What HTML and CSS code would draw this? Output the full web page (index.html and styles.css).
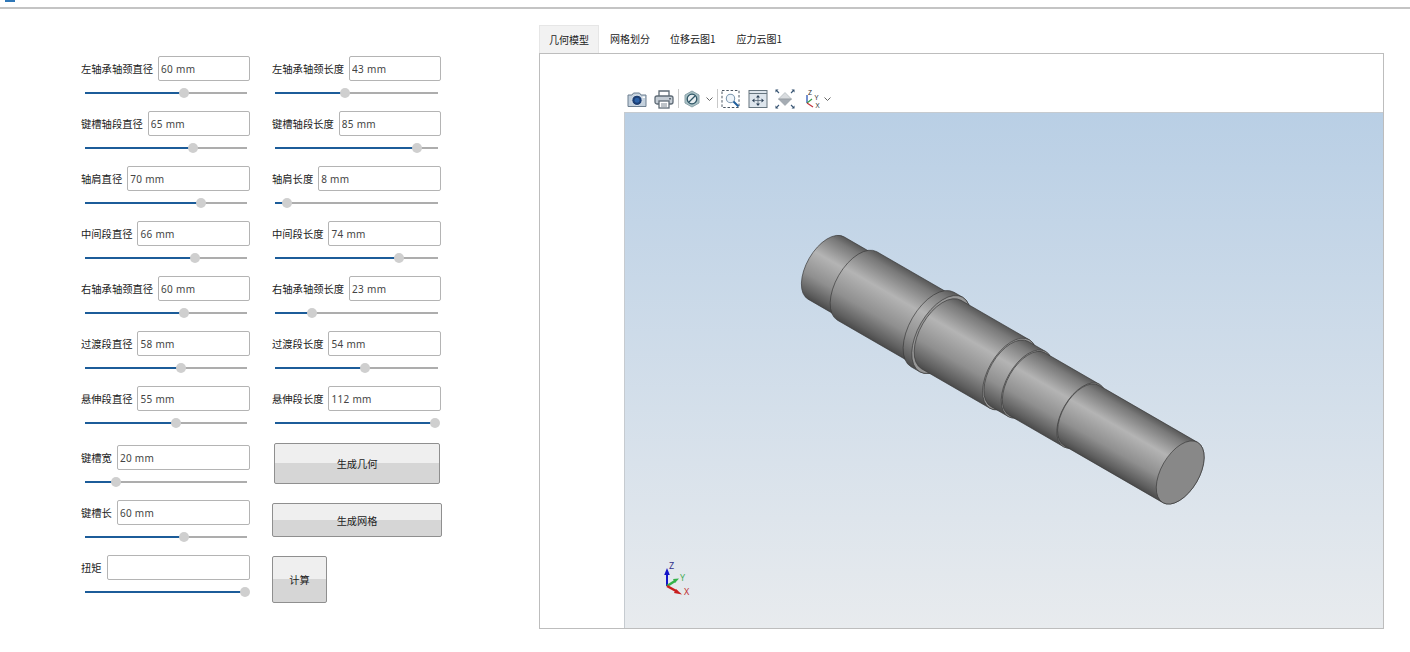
FILE: index.html
```html
<!DOCTYPE html>
<html lang="zh">
<head>
<meta charset="utf-8">
<title>轴设计</title>
<link rel="stylesheet" href="styles.css">
</head>
<body>
<header class="topbar"><span class="topbar-mark"></span></header>
<main class="main">
  <section class="controls">
    <div class="col">
      <div class="field"><div class="line"><label>左轴承轴颈直径</label><input value="60 mm"></div><div class="slider"><div class="fill" style="width:61.1%"><i class="thumb"></i></div></div></div>
      <div class="field"><div class="line"><label>键槽轴段直径</label><input value="65 mm"></div><div class="slider"><div class="fill" style="width:66.7%"><i class="thumb"></i></div></div></div>
      <div class="field"><div class="line"><label>轴肩直径</label><input value="70 mm"></div><div class="slider"><div class="fill" style="width:71.6%"><i class="thumb"></i></div></div></div>
      <div class="field"><div class="line"><label>中间段直径</label><input value="66 mm"></div><div class="slider"><div class="fill" style="width:67.9%"><i class="thumb"></i></div></div></div>
      <div class="field"><div class="line"><label>右轴承轴颈直径</label><input value="60 mm"></div><div class="slider"><div class="fill" style="width:61.1%"><i class="thumb"></i></div></div></div>
      <div class="field"><div class="line"><label>过渡段直径</label><input value="58 mm"></div><div class="slider"><div class="fill" style="width:59.3%"><i class="thumb"></i></div></div></div>
      <div class="field field-last"><div class="line"><label>悬伸段直径</label><input value="55 mm"></div><div class="slider"><div class="fill" style="width:56.2%"><i class="thumb"></i></div></div></div>
      <div class="field"><div class="line"><label>键槽宽</label><input value="20 mm"></div><div class="slider"><div class="fill" style="width:19.1%"><i class="thumb"></i></div></div></div>
      <div class="field"><div class="line"><label>键槽长</label><input value="60 mm"></div><div class="slider"><div class="fill" style="width:61.1%"><i class="thumb"></i></div></div></div>
      <div class="field"><div class="line"><label>扭矩</label><input value=""></div><div class="slider"><div class="fill" style="width:98.8%"><i class="thumb"></i></div></div></div>
    </div>
    <div class="col">
      <div class="field"><div class="line"><label>左轴承轴颈长度</label><input value="43 mm"></div><div class="slider"><div class="fill" style="width:42.9%"><i class="thumb"></i></div></div></div>
      <div class="field"><div class="line"><label>键槽轴段长度</label><input value="85 mm"></div><div class="slider"><div class="fill" style="width:87.1%"><i class="thumb"></i></div></div></div>
      <div class="field"><div class="line"><label>轴肩长度</label><input value="8 mm"></div><div class="slider"><div class="fill" style="width:7.4%"><i class="thumb"></i></div></div></div>
      <div class="field"><div class="line"><label>中间段长度</label><input value="74 mm"></div><div class="slider"><div class="fill" style="width:76%"><i class="thumb"></i></div></div></div>
      <div class="field"><div class="line"><label>右轴承轴颈长度</label><input value="23 mm"></div><div class="slider"><div class="fill" style="width:22.7%"><i class="thumb"></i></div></div></div>
      <div class="field"><div class="line"><label>过渡段长度</label><input value="54 mm"></div><div class="slider"><div class="fill" style="width:55.2%"><i class="thumb"></i></div></div></div>
      <div class="field"><div class="line"><label>悬伸段长度</label><input value="112 mm"></div><div class="slider"><div class="fill" style="width:98.2%"><i class="thumb"></i></div></div></div>
      <button class="btn btn-geo">生成几何</button>
      <button class="btn btn-mesh">生成网格</button>
      <button class="btn btn-calc">计算</button>
    </div>
  </section>
  <section class="results">
    <nav class="tabs">
      <span class="tab tab-active">几何模型</span>
      <span class="tab">网格划分</span>
      <span class="tab">位移云图1</span>
      <span class="tab">应力云图1</span>
    </nav>
    <div class="pane">
      <div class="toolbar">
        <svg class="ico ico-camera" viewBox="0 0 20 20"><path d="M1 6h4l1.500-2h6l1.500 2h5v11.500h-18z" fill="#c3d0dc" stroke="#6d7f90"/><circle cx="10" cy="11.300" r="5.200" fill="#1d3f73" stroke="#e4ebf1"/><circle cx="10" cy="11.300" r="2.500" fill="#2c62a8"/><rect x="15.500" y="7.500" width="2.500" height="1.500" fill="#fff"/></svg>
        <svg class="ico ico-print" viewBox="0 0 20 20"><path d="M5 7v-5h10v5" fill="#fff" stroke="#5f6b76" stroke-width="1.300"/><rect x="1" y="7" width="18" height="8" rx="2" fill="#c4ccd4" stroke="#5f6b76" stroke-width="1.300"/><rect x="5" y="12" width="10" height="7" fill="#fff" stroke="#5f6b76" stroke-width="1.300"/><path d="M7 15h6M7 17h6" stroke="#7c8791"/><rect x="15" y="9" width="2" height="1.500" fill="#5f6b76"/></svg>
        <span class="sep sep-a"></span>
        <svg class="ico ico-hex" viewBox="0 0 16 20"><path d="M8 2l7 4v8l-7 4-7-4v-8z" fill="#a8c0c4" stroke="#8ba3aa"/><circle cx="8" cy="10" r="4.800" fill="#e7edf0" stroke="#2f5666" stroke-width="1.300"/><path d="M5 13l6-6" stroke="#2f5666" stroke-width="1.300"/></svg>
        <svg class="chev chev-a" viewBox="0 0 9 20"><path d="M1.500 8.500l3 3 3-3" fill="none" stroke="#666" stroke-width="1"/></svg>
        <span class="sep sep-b"></span>
        <svg class="ico ico-zoom" viewBox="0 0 20 20"><rect x="1" y="1.500" width="17" height="17" fill="none" stroke="#4a5662" stroke-dasharray="2.500 1.800"/><circle cx="9.500" cy="9.500" r="4.200" fill="#eef4f9" stroke="#7d98b0" stroke-width="1.100"/><path d="M12.500 12.500l5 5" stroke="#1f5e9c" stroke-width="2"/></svg>
        <svg class="ico ico-fit" viewBox="0 0 20 20"><rect x="1" y="1.500" width="18" height="17" fill="#dde5ec" stroke="#66757f"/><path d="M1 4.500h18" stroke="#66757f"/><path d="M10 8v7M6.500 11.500h7" stroke="#5a6a79" stroke-width=".8"/><path d="M10 6l-2 2.500h4zM10 17l-2-2.500h4zM4 11.500l2.500-2v4zM16 11.500l-2.500-2v4z" fill="#2a3f55"/></svg>
        <svg class="ico ico-diamond" viewBox="0 0 20 20"><path d="M10 3.500l6.500 6.500h-13z" fill="#d9dcdf" stroke="#a5adb4" stroke-width=".6"/><path d="M3.500 10h13l-6.500 6.500z" fill="#a5acb3" stroke="#8d959c" stroke-width=".6"/><path d="M2 2l2 2M18 2l-2 2M2 18l2-2M18 18l-2-2" stroke="#3d5a78" stroke-width="1.100"/><path d="M.5.500h3l-3 3zM19.500.500h-3l3 3zM.5 19.500h3l-3-3zM19.500 19.500h-3l3-3z" fill="#2f4c6b"/></svg>
        <svg class="ico ico-axes" viewBox="0 0 20 20"><path d="M4 14v-8" stroke="#1a46b0" stroke-width="1.200"/><path d="M4 14l5-4" stroke="#3aa04a" stroke-width="1.200"/><path d="M4 14l6 4" stroke="#c0303a" stroke-width="1.200"/><text class="axes-txt" x="5" y="5.500">Z</text><text class="axes-txt" x="11.500" y="11">Y</text><text class="axes-txt" x="12.500" y="19">X</text></svg>
        <svg class="chev chev-b" viewBox="0 0 9 20"><path d="M1.500 8.500l3 3 3-3" fill="none" stroke="#666" stroke-width="1"/></svg>
      </div>
      <div class="viewer">
        <svg class="scene" viewBox="625 113 758 515">
          <defs>
            <linearGradient id="metal" x1="0" y1="0" x2="0" y2="1">
              <stop offset="0" stop-color="#585858"/>
              <stop offset=".1" stop-color="#797979"/>
              <stop offset=".38" stop-color="#b4b4b4"/>
              <stop offset=".7" stop-color="#8f8f8f"/>
              <stop offset=".92" stop-color="#5f5f5f"/>
              <stop offset="1" stop-color="#4a4a4a"/>
            </linearGradient>
          </defs>
          <g transform="translate(826 268) rotate(30)" fill="url(#metal)" stroke="#383838" stroke-width=".6">
            <path d="M0-36L36-36A19.400 36 0 0 1 36 36L0 36A19.400 36 0 0 1 0-36z"/>
            <path d="M36-39.500L123-39.500A21.300 39.500 0 0 1 123 39.500L36 39.500A21.300 39.500 0 0 1 36-39.500z"/>
            <path d="M123-43L133-43A23.200 43 0 0 1 133 43L123 43A23.200 43 0 0 1 123-43z"/>
            <ellipse cx="133" cy="0" rx="23.200" ry="43" fill="#969696"/>
            <path d="M133-39.500L212-39.500A21.300 39.500 0 0 1 212 39.500L133 39.500A21.300 39.500 0 0 1 133-39.500z"/>
            <ellipse cx="212" cy="0" rx="21.300" ry="39.500" fill="#969696"/>
            <path d="M212-37.500L232-37.500A20.300 37.500 0 0 1 232 37.500L212 37.500A20.300 37.500 0 0 1 212-37.500z"/>
            <ellipse cx="232" cy="0" rx="20.300" ry="37.500" fill="#969696"/>
            <path d="M232-36L295-36A19.400 36 0 0 1 295 36L232 36A19.400 36 0 0 1 232-36z"/>
            <ellipse cx="295" cy="0" rx="19.400" ry="36" fill="#969696"/>
            <path d="M295-34.800L409-34.800A19 34.800 0 0 1 409 34.800L295 34.800A19 34.800 0 0 1 295-34.800z"/>
            <ellipse cx="409" cy="0" rx="19" ry="34.800" fill="#888888"/>
          </g>
          <g stroke-width="2" fill="none">
            <path d="M667 586V574" stroke="#1414c8"/>
            <path d="M667 586l8-5" stroke="#34b24a" stroke-width="2.500"/>
            <path d="M667 586l10 5.500" stroke="#c81e1e" stroke-width="2.500"/>
          </g>
          <path d="M667 568l-2.800 7h5.600z" fill="#1414c8"/>
          <path d="M679 578.500l-6 .5 2 4z" fill="#34b24a"/>
          <path d="M682 594.500l-6-5.500-2 4z" fill="#c81e1e"/>
          <text class="triad triad-z" x="669" y="568.500">Z</text>
          <text class="triad triad-y" x="680" y="580.500">Y</text>
          <text class="triad triad-x" x="684" y="594.500">X</text>
        </svg>
      </div>
    </div>
  </section>
</main>
</body>
</html>
```
FILE: styles.css
```css
* { box-sizing: border-box; }
html, body { margin: 0; padding: 0; background: #fff; }
body {
  width: 1410px;
  height: 652px;
  overflow: hidden;
  color: #222;
  font-family: "Noto Sans", "Noto Sans CJK SC", sans-serif;
  font-size: 10.3px;
}
.topbar {
  height: 9px;
  padding-left: 5px;
  border-bottom: 2px solid #c4c4c4;
}
.topbar-mark { display: block; width: 10px; height: 2px; background: #2f78b8; }
.main { display: flex; }
.controls {
  width: 539px;
  flex: none;
  padding: 46px 0 0 81px;
  display: flex;
  gap: 22px;
  align-items: flex-start;
}
.col { width: 169px; display: flex; flex-direction: column; }
.field { height: 55px; }
.field-last { height: 59px; }
.line { display: flex; align-items: center; height: 26px; gap: 5px; }
.line label { font-family: "Noto Sans CJK SC", sans-serif; font-size: 10.3px; white-space: nowrap; flex: none; }
.line input {
  flex: 1;
  min-width: 0;
  height: 25px;
  margin-top: 1px;
  padding: 0 2px;
  border: 1px solid #b4b4b4;
  border-radius: 2px;
  background: #fff;
  color: #444;
  font: 10px "Noto Sans", sans-serif;
  letter-spacing: .3px;
}
.slider { height: 2px; margin: 11px 3px 0 4px; background: #adadad; }
.col + .col .slider { margin-left: 3px; }
.fill { position: relative; height: 2px; background: #1c5c99; }
.thumb {
  position: absolute;
  right: -5px;
  top: -4px;
  width: 10px;
  height: 10px;
  border-radius: 50%;
  background: #cfcfcf;
}
.btn {
  display: block;
  padding: 0;
  border: 1px solid #8f8f8f;
  border-radius: 2px;
  color: #222;
  background: linear-gradient(#efefef 50%, #d6d6d6 50%);
  font: 10.2px "Noto Sans CJK SC", sans-serif;
}
.btn-geo { width: 166px; height: 41px; margin: 3px 0 0 2px; }
.btn-mesh { width: 170px; height: 34px; margin-top: 19px; }
.btn-calc { width: 55px; height: 47px; margin-top: 19px; }
.results { width: 845px; flex: none; padding-top: 16px; }
.tabs { display: flex; height: 28px; }
.tab {
  padding: 0 10px;
  line-height: 28px;
  font-family: "Noto Sans CJK SC", sans-serif;
  font-size: 10px;
  white-space: nowrap;
}
.tab:nth-child(2) { margin-left: 1px; }
.tab:nth-child(4) { margin-left: 1px; }
.tab-active { width: 60px; background: #f2f2f2; border: 1px solid #e6e6e6; border-bottom: none; padding: 0 9px; line-height: 27px; }
.pane {
  height: 576px;
  border: 1px solid #bdbdbd;
  display: flex;
  flex-direction: column;
}
.toolbar { height: 58px; flex: none; padding: 35px 0 0 87px; display: flex; align-items: flex-start; }
.ico { display: block; width: 20px; height: 20px; flex: none; }
.ico-hex { width: 16px; }
.chev { display: block; width: 9px; height: 20px; flex: none; }
.sep { display: block; width: 1px; height: 19px; background: #c9c9c9; flex: none; }
.ico-print { margin-left: 7px; }
.sep-a { margin-left: 4px; }
.ico-hex { margin-left: 5px; }
.chev-a { margin-left: 5px; }
.sep-b { margin-left: 3px; }
.ico-zoom { margin-left: 3px; }
.ico-fit { margin-left: 7px; }
.ico-diamond { margin-left: 7px; }
.ico-axes { margin-left: 8px; }
.chev-b { margin-left: 0; }
.axes-txt { font: 7px "Noto Sans", sans-serif; fill: #333; }
.viewer {
  flex: 1;
  min-height: 0;
  margin-left: 84px;
  border-left: 1px solid #c6cbd0;
  border-top: 1px solid #c6cbd0;
  background: linear-gradient(#b9cfe5, #e8ebee);
}
.scene { display: block; width: 100%; height: 100%; }
.triad { font: 9px "Noto Sans", sans-serif; }
.triad-z { fill: #33338a; }
.triad-y { fill: #4cae5c; }
.triad-x { fill: #c03030; }
```
